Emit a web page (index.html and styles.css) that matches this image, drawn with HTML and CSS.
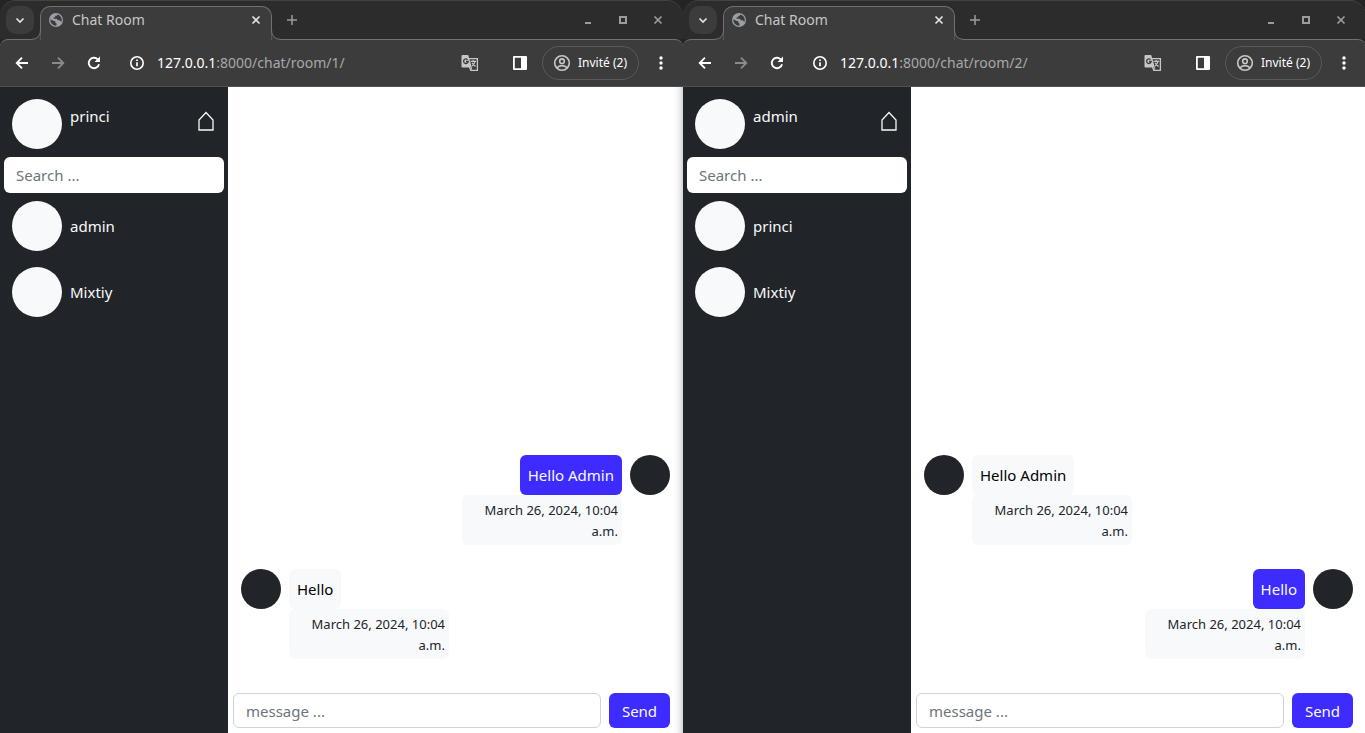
FILE: index.html
```html
<!DOCTYPE html>
<html lang="en">
<head>
<meta charset="utf-8">
<title>Chat Room</title>
<link rel="stylesheet" href="styles.css">
</head>
<body>
<svg class="sprite" aria-hidden="true">
  <symbol id="chevron" viewBox="0 0 28 28"><path d="M10.500 12.500l3.500 3.500 3.500-3.500" fill="none" stroke="currentColor" stroke-width="1.700"/></symbol>
  <symbol id="globe" viewBox="0 0 14 14"><circle cx="7" cy="7" r="7" fill="#9aa0a6"/><path d="M1.400 6.200l3.200 1.900h1.600v1.500l1.300.9v2.100A5.600 5.600 0 0 1 1.400 6.200zM8 1.500v1.300H6.200v1.500H4.600v1.400h3.200l1 1.500h2l1 1.300.7.200A5.600 5.600 0 0 0 8 1.500z" fill="#3c3c3c"/></symbol>
  <symbol id="cross" viewBox="0 0 10 10"><path d="M1.500 1.500l7 7M8.500 1.500l-7 7" fill="none" stroke="currentColor" stroke-width="1.700"/></symbol>
  <symbol id="plus" viewBox="0 0 12 12"><path d="M6 1v10M1 6h10" fill="none" stroke="currentColor" stroke-width="1.500"/></symbol>
  <symbol id="minimize" viewBox="0 0 10 10"><path d="M2 8h6" fill="none" stroke="currentColor" stroke-width="2"/></symbol>
  <symbol id="maximize" viewBox="0 0 10 10"><path d="M2 2h6v6H2z" fill="none" stroke="currentColor" stroke-width="2"/></symbol>
  <symbol id="arrow" viewBox="0 0 16 16"><path d="M14 8H3M8 2.700L2.700 8 8 13.300" fill="none" stroke="currentColor" stroke-width="1.800"/></symbol>
  <symbol id="reload" viewBox="0 0 16 16"><path d="M13 9.200A5.200 5.200 0 1 1 11.700 4.400" fill="none" stroke="currentColor" stroke-width="1.900"/><path d="M14 1.500V7H8.500z" fill="currentColor"/></symbol>
  <symbol id="info" viewBox="0 0 16 16"><circle cx="8" cy="8" r="6.200" fill="none" stroke="currentColor" stroke-width="1.600"/><path d="M8 7.300v4M8 4.400v1.700" stroke="currentColor" stroke-width="1.700"/></symbol>
  <symbol id="translate" viewBox="0 0 18 18"><path d="M8 4.700h8.400v11.700H9.800L8.500 13" fill="none" stroke="currentColor" stroke-width="1.300"/><path d="M1.500 1h5.700l3.700 12.500H1.500a1 1 0 0 1-1-1V2a1 1 0 0 1 1-1z" fill="currentColor"/><path d="M6.600 5.600A2.300 2.300 0 1 0 7.200 7.500H5" fill="none" stroke="#3c3c3c" stroke-width="1.300"/><path d="M9.500 7.300h5.700M12.200 6v1.300M14 7.300c-.5 2.500-2 3.800-3 4.800M11 9l3.500 3.500M10.700 13.500l-1 2.500" fill="none" stroke="currentColor" stroke-width="1.200"/></symbol>
  <symbol id="panel" viewBox="0 0 16 16"><path d="M2 1h12q1 0 1 1v12q0 1-1 1H2q-1 0-1-1V2q0-1 1-1zm.8 1.800v10.400H9V2.800z" fill="currentColor"/></symbol>
  <symbol id="person" viewBox="0 0 18 18"><g fill="none" stroke="currentColor" stroke-width="1.600"><circle cx="9" cy="9" r="7.300"/><circle cx="9" cy="7.200" r="2.300"/><path d="M3.800 14c2.500-3.200 7.900-3.200 10.400 0"/></g></symbol>
  <symbol id="dots" viewBox="0 0 4 16"><circle cx="2" cy="3" r="1.700" fill="currentColor"/><circle cx="2" cy="8" r="1.700" fill="currentColor"/><circle cx="2" cy="13" r="1.700" fill="currentColor"/></symbol>
  <symbol id="house" viewBox="0 0 16 20"><path d="M1 19V9l7-7.500L15 9v10z" fill="none" stroke="currentColor" stroke-width="1.300"/></symbol>
  <symbol id="flare" viewBox="0 0 10 34"><path d="M0 33.500Q9.500 33 9.500 24V34H0z" fill="#3c3c3c"/><path d="M0 33.500Q9.500 33 9.500 24" fill="none" stroke="#717171"/></symbol>
</svg>
<main class="desktop">
  <section class="window window-first" aria-label="Room 1">
    <header class="tabstrip">
      <button class="tab-search" aria-label="Search tabs"><svg class="icon-28"><use href="#chevron"/></svg></button>
      <div class="tab">
        <svg class="flare flare-left"><use href="#flare"/></svg>
        <svg class="icon-14"><use href="#globe"/></svg>
        <span class="tab-title">Chat Room</span>
        <button class="tab-close" aria-label="Close tab"><svg class="icon-10"><use href="#cross"/></svg></button>
        <svg class="flare flare-right"><use href="#flare"/></svg>
      </div>
      <button class="new-tab" aria-label="New tab"><svg class="icon-12"><use href="#plus"/></svg></button>
      <div class="controls">
        <button aria-label="Minimize"><svg class="icon-10"><use href="#minimize"/></svg></button>
        <button aria-label="Maximize"><svg class="icon-10"><use href="#maximize"/></svg></button>
        <button aria-label="Close"><svg class="icon-10"><use href="#cross"/></svg></button>
      </div>
    </header>
    <nav class="toolbar" aria-label="Browser">
      <div class="history">
        <button aria-label="Back"><svg class="icon-16"><use href="#arrow"/></svg></button>
        <button class="forward" aria-label="Forward" disabled><svg class="icon-16"><use href="#arrow"/></svg></button>
        <button aria-label="Reload"><svg class="icon-16"><use href="#reload"/></svg></button>
      </div>
      <button class="site-info" aria-label="Site information"><svg class="icon-16"><use href="#info"/></svg></button>
      <span class="url"><b>127.0.0.1</b>:8000/chat/room/1/</span>
      <button class="translate" aria-label="Translate"><svg class="icon-18"><use href="#translate"/></svg></button>
      <button class="panel" aria-label="Side panel"><svg class="icon-16"><use href="#panel"/></svg></button>
      <button class="profile"><svg class="icon-18"><use href="#person"/></svg>Invité (2)</button>
      <button class="menu" aria-label="Menu"><svg class="icon-dots"><use href="#dots"/></svg></button>
    </nav>
    <div class="page">
      <aside class="sidebar">
        <div class="me"><span class="avatar"></span><span class="me-name">princi</span><a class="home" href="#" aria-label="Home"><svg class="icon-house"><use href="#house"/></svg></a></div>
        <input class="search" type="search" placeholder="Search ..." aria-label="Search users">
        <a class="user" href="#"><span class="avatar"></span>admin</a>
        <a class="user" href="#"><span class="avatar"></span>Mixtiy</a>
      </aside>
      <div class="chat">
        <div class="messages">
          <article class="message sent"><span class="face"></span><div class="body"><p class="bubble">Hello Admin</p><time class="stamp">March 26, 2024, 10:04 a.m.</time></div></article>
          <article class="message"><span class="face"></span><div class="body"><p class="bubble">Hello</p><time class="stamp">March 26, 2024, 10:04 a.m.</time></div></article>
        </div>
        <form class="composer"><input type="text" placeholder="message ..." aria-label="Message"><button type="button">Send</button></form>
      </div>
    </div>
  </section>
  <section class="window" aria-label="Room 2">
    <header class="tabstrip">
      <button class="tab-search" aria-label="Search tabs"><svg class="icon-28"><use href="#chevron"/></svg></button>
      <div class="tab">
        <svg class="flare flare-left"><use href="#flare"/></svg>
        <svg class="icon-14"><use href="#globe"/></svg>
        <span class="tab-title">Chat Room</span>
        <button class="tab-close" aria-label="Close tab"><svg class="icon-10"><use href="#cross"/></svg></button>
        <svg class="flare flare-right"><use href="#flare"/></svg>
      </div>
      <button class="new-tab" aria-label="New tab"><svg class="icon-12"><use href="#plus"/></svg></button>
      <div class="controls">
        <button aria-label="Minimize"><svg class="icon-10"><use href="#minimize"/></svg></button>
        <button aria-label="Maximize"><svg class="icon-10"><use href="#maximize"/></svg></button>
        <button aria-label="Close"><svg class="icon-10"><use href="#cross"/></svg></button>
      </div>
    </header>
    <nav class="toolbar" aria-label="Browser">
      <div class="history">
        <button aria-label="Back"><svg class="icon-16"><use href="#arrow"/></svg></button>
        <button class="forward" aria-label="Forward" disabled><svg class="icon-16"><use href="#arrow"/></svg></button>
        <button aria-label="Reload"><svg class="icon-16"><use href="#reload"/></svg></button>
      </div>
      <button class="site-info" aria-label="Site information"><svg class="icon-16"><use href="#info"/></svg></button>
      <span class="url"><b>127.0.0.1</b>:8000/chat/room/2/</span>
      <button class="translate" aria-label="Translate"><svg class="icon-18"><use href="#translate"/></svg></button>
      <button class="panel" aria-label="Side panel"><svg class="icon-16"><use href="#panel"/></svg></button>
      <button class="profile"><svg class="icon-18"><use href="#person"/></svg>Invité (2)</button>
      <button class="menu" aria-label="Menu"><svg class="icon-dots"><use href="#dots"/></svg></button>
    </nav>
    <div class="page">
      <aside class="sidebar">
        <div class="me"><span class="avatar"></span><span class="me-name">admin</span><a class="home" href="#" aria-label="Home"><svg class="icon-house"><use href="#house"/></svg></a></div>
        <input class="search" type="search" placeholder="Search ..." aria-label="Search users">
        <a class="user" href="#"><span class="avatar"></span>princi</a>
        <a class="user" href="#"><span class="avatar"></span>Mixtiy</a>
      </aside>
      <div class="chat">
        <div class="messages">
          <article class="message"><span class="face"></span><div class="body"><p class="bubble">Hello Admin</p><time class="stamp">March 26, 2024, 10:04 a.m.</time></div></article>
          <article class="message sent"><span class="face"></span><div class="body"><p class="bubble">Hello</p><time class="stamp">March 26, 2024, 10:04 a.m.</time></div></article>
        </div>
        <form class="composer"><input type="text" placeholder="message ..." aria-label="Message"><button type="button">Send</button></form>
      </div>
    </div>
  </section>
</main>
</body>
</html>
```
FILE: styles.css
```css
* { box-sizing: border-box; }
body {
  margin: 0;
  overflow-x: hidden;
  background: #242424;
  font: 15px/24px "Noto Sans", "Open Sans", sans-serif;
}
button, input { font: inherit; }
button { border: 0; padding: 0; background: none; color: inherit; display: flex; align-items: center; justify-content: center; }
svg { display: block; flex: none; }
a { color: inherit; text-decoration: none; }
.sprite { position: absolute; width: 0; height: 0; }
.icon-10 { width: 10px; height: 10px; }
.icon-12 { width: 12px; height: 12px; }
.icon-14 { width: 14px; height: 14px; }
.icon-16 { width: 16px; height: 16px; }
.icon-18 { width: 18px; height: 18px; }
.icon-28 { width: 28px; height: 28px; }
.icon-dots { width: 4px; height: 16px; }
.icon-house { width: 16px; height: 20px; }

.desktop { display: grid; grid-template-columns: 1fr 1fr; width: calc(100% + 1px); min-height: 100vh; }
.window { display: flex; flex-direction: column; min-width: 0; }

.tabstrip {
  display: flex;
  align-items: center;
  height: 39px;
  padding: 0 20px 0 6px;
  background: #2c2c2c;
  border-top: 1px solid #424242;
  border-radius: 16px 16px 0 0;
  color: #9c9c9c;
}
.tab-search { border-radius: 10px; background: #3c3c3c; color: #e3e3e3; }
.tab {
  position: relative;
  z-index: 1;
  display: flex;
  align-items: center;
  align-self: flex-end;
  width: 232px;
  height: 34px;
  margin: 0 0 -1px 6px;
  padding: 0 10px 8px 8px;
  background: #3c3c3c;
  border: 1px solid #717171;
  border-bottom: 0;
  border-radius: 10px 10px 0 0;
  color: #c7c7c7;
}
.tab-title { margin-left: 9px; flex: 1; font-size: 14px; line-height: 20px; }
.tab-close { color: #e3e3e3; }
.flare { position: absolute; bottom: 0; width: 10px; height: 34px; }
.flare-left { left: -10px; }
.flare-right { right: -10px; transform: scaleX(-1); }
.new-tab { margin-left: 14px; }
.controls { display: flex; gap: 25px; margin-left: auto; }

.toolbar {
  display: flex;
  align-items: center;
  height: 48px;
  padding: 0 20px 0 14px;
  background: #3c3c3c;
  border-top: 1px solid #717171;
  border-bottom: 1px solid #505050;
  border-radius: 8px 8px 0 0;
  color: #fff;
}
.history { display: flex; gap: 20px; }
.forward { color: #8b8b8b; transform: scaleX(-1); }
.site-info { margin-left: 27px; }
.url { flex: 1; margin-left: 12px; color: #a8a8a8; font-size: 14px; line-height: 20px; }
.url b { color: #fff; font-weight: 400; }
.translate { color: #c7c7c7; }
.panel { margin: 0 14px 0 33px; }
.profile {
  gap: 7px;
  height: 34px;
  padding: 0 11px 0 10px;
  border: 1px solid #595959;
  border-radius: 17px;
  font-size: 12px;
}
.profile svg { color: #c7c7c7; }
.menu { margin-left: 20px; }

.page { display: grid; grid-template-columns: minmax(228px, 1fr) 2fr; flex: 1; background: #fff; }
.sidebar { background: #212529; color: #f8f9fa; }
.avatar { width: 50px; height: 50px; border-radius: 50%; background: #f8f9fa; flex: none; }
.me { display: flex; gap: 8px; padding: 12px 14px 8px 12px; }
.me-name { flex: 1; padding-top: 5px; }
.home { padding-top: 12px; }
.search {
  display: block;
  width: calc(100% - 8px);
  height: 36px;
  margin: 0 4px;
  padding: 0 12px;
  border: 0;
  border-radius: 6px;
  background: #fff;
}
input::placeholder { color: #6c757d; opacity: 1; }
.user { display: flex; align-items: center; gap: 8px; padding: 8px 12px; }

.chat { display: flex; flex-direction: column; min-width: 0; }
.window-first .chat { box-shadow: inset -10px 0 10px -10px #aaa; }
.messages { flex: 1; display: flex; flex-direction: column; justify-content: flex-end; gap: 24px; padding: 0 13px 34px; }
.message { display: flex; align-items: flex-start; gap: 8px; }
.face { width: 40px; height: 40px; border-radius: 50%; background: #212529; }
.body { display: flex; flex-direction: column; align-items: flex-start; }
.bubble { margin: 0; padding: 8px; border-radius: 6px; background: #f8f9fa; color: #000; }
.stamp { width: 160px; padding: 5px 4px 3px; border-radius: 6px; background: #f8f9fa; color: #212529; font-size: 13px; line-height: 21px; text-align: right; }
.sent { flex-direction: row-reverse; }
.sent .body { align-items: flex-end; }
.sent .bubble, .composer button { background: #3d2bff; color: #f8f9fa; }
.composer { display: flex; gap: 8px; padding: 0 13px 5px 5px; }
.composer input { flex: 1; min-width: 0; height: 35px; padding: 0 12px; border: 1px solid #ced4da; border-radius: 6px; background: #fff; }
.composer button { min-width: 61px; padding: 0 12px; border-radius: 6px; }
```
